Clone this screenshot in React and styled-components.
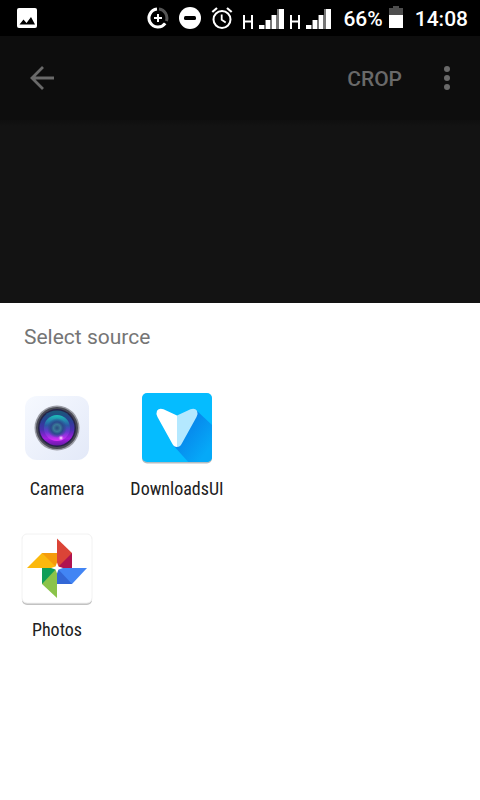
import styled, { createGlobalStyle } from "styled-components";

const GlobalStyle = createGlobalStyle`
  * {
    box-sizing: border-box;
  }

  body {
    margin: 0;
    background-color: #fff;
    font-family: Roboto, "Liberation Sans", sans-serif;
  }

  button {
    padding: 0;
    border: none;
    background: none;
    font-family: inherit;
    cursor: pointer;
  }

  svg {
    display: block;
    flex-shrink: 0;
  }
`;

const Screen = styled.div`
  display: flex;
  flex-direction: column;
  min-height: 100vh;
`;

const StatusBar = styled.div`
  display: flex;
  align-items: center;
  justify-content: space-between;
  height: 36px;
  padding: 0 12px 0 16px;
  background-color: #000;
  color: #fff;
`;

const StatusIcons = styled.div`
  display: flex;
  align-items: center;
  gap: ${(props) => props.$gap}px;
`;

const StatusText = styled.span`
  padding-top: 2px;
  font-size: 21px;
  font-weight: 500;
  line-height: 34px;
`;

const Toolbar = styled.header`
  display: flex;
  align-items: center;
  height: 84px;
  padding: 0 15px 0 24px;
  background-color: #0d0d0d;
  color: #696969;
`;

const IconButton = styled.button`
  display: grid;
  place-items: center;
  width: 36px;
  height: 48px;
  color: inherit;
`;

const CropButton = styled.button`
  margin-left: auto;
  margin-right: 27px;
  padding-top: 2px;
  color: inherit;
  font-size: 21px;
  font-weight: 500;
  line-height: 46px;
`;

const Preview = styled.main`
  height: 183px;
  background: linear-gradient(#0f0f0f, #131313 6px);
`;

const Sheet = styled.section`
  flex: 1;
  padding: 20px 0 24px;
  background-color: #fff;
`;

const Title = styled.h1`
  margin: 0 24px 41px;
  color: #757575;
  font-size: 21px;
  font-weight: 400;
  line-height: 28px;
`;

const SourceRows = styled.div`
  display: flex;
  flex-direction: column;
  gap: 34px;
`;

const SourceList = styled.div`
  display: grid;
  grid-template-columns: repeat(4, minmax(0, 1fr));
  column-gap: 6px;
  padding-right: 6px;
`;

const Source = styled.button`
  display: flex;
  flex-direction: column;
  align-items: center;
  gap: 15px;
  color: #212121;
`;

const SourceName = styled.span`
  font-family: "Roboto Condensed", "Liberation Sans Narrow", Roboto, sans-serif;
  font-size: 18px;
  line-height: 20px;
  white-space: nowrap;
`;

function ImageIcon() {
  return (
    <svg width="22" height="22" viewBox="0 0 22 22">
      <rect x="1" y="1" width="20" height="20" rx="2" fill="#fff" />
      <path d="M3.500 17.500l4-5 3 3.500 4.500-6 4 7.500z" fill="#000" />
    </svg>
  );
}

function DataSaverIcon() {
  return (
    <svg width="22" height="22" viewBox="0 0 22 22" fill="none" stroke="#fff">
      <path d="M12 2.1A9 9 0 0 1 19.4 14" stroke="#555" strokeWidth="3" />
      <path d="M10 2.1A9 9 0 1 0 18.2 16.4" strokeWidth="3" />
      <path d="M11 7v8M7 11h8" strokeWidth="2" />
    </svg>
  );
}

function DoNotDisturbIcon() {
  return (
    <svg width="22" height="22" viewBox="0 0 22 22">
      <circle cx="11" cy="11" r="11" fill="#fff" />
      <rect x="5" y="9" width="12" height="4" rx="1.5" fill="#000" />
    </svg>
  );
}

function AlarmIcon() {
  return (
    <svg width="22" height="22" viewBox="0 0 22 22" fill="none" stroke="#fff">
      <circle cx="11" cy="12.5" r="8.5" strokeWidth="2" />
      <path d="M1.3 5L6 1M20.7 5L16 1" strokeWidth="2.2" />
      <path d="M10.7 7.5v5.3l4 2.6" strokeWidth="1.8" />
    </svg>
  );
}

function SignalIcon() {
  return (
    <svg width="41" height="22" viewBox="1 -1 41 22">
      <path
        d="M2 7v14M10 7v14M2 13.5h8"
        fill="none"
        stroke="#fff"
        strokeWidth="2"
      />
      <path d="M17 17h6v4h-6zM23 12h6v9h-6zM29 7h6v14h-6zM35 1h7v20h-7z" fill="#777" />
      <path d="M17 17h5v4h-5zM24 12h4v9h-4zM30 7h4v14h-4zM37 1h5v20h-5z" fill="#fff" />
    </svg>
  );
}

function BatteryIcon() {
  return (
    <svg width="14" height="24" viewBox="0 0 14 24">
      <path d="M0 2h4V0h6v2h4v7H0z" fill="#4d4d4d" />
      <path d="M0 9h14v13H0z" fill="#fff" />
    </svg>
  );
}

function BackIcon() {
  return (
    <svg width="26" height="26" viewBox="0 0 26 26" fill="none" stroke="currentColor">
      <path d="M14 2L3 13l11 11M3 13h22" strokeWidth="2.8" />
    </svg>
  );
}

function MoreIcon() {
  return (
    <svg width="6" height="24" viewBox="0 0 6 24" fill="currentColor">
      <circle cx="3" cy="3" r="3" />
      <circle cx="3" cy="12" r="3" />
      <circle cx="3" cy="21" r="3" />
    </svg>
  );
}

function CameraIcon() {
  return (
    <svg width="72" height="72" viewBox="0 0 72 72">
      <defs>
        <linearGradient id="camera-body" x1="0" y1="0" x2="1" y2="1">
          <stop offset="0" stopColor="#f6f9ff" />
          <stop offset="1" stopColor="#e3e9f8" />
        </linearGradient>
        <linearGradient id="camera-glass" x1="0" y1="0" x2="0" y2="1">
          <stop offset="0" stopColor="#1a5a78" />
          <stop offset="0.3" stopColor="#2a3f94" />
          <stop offset="0.55" stopColor="#4a2fb0" />
          <stop offset="0.8" stopColor="#a21ee0" />
          <stop offset="1" stopColor="#6a1aa8" />
        </linearGradient>
        <linearGradient id="camera-inner" x1="0" y1="0" x2="0" y2="1">
          <stop offset="0" stopColor="#1cc0b8" />
          <stop offset="0.4" stopColor="#2b5aa6" />
          <stop offset="0.65" stopColor="#6a36d0" />
          <stop offset="1" stopColor="#e030fa" />
        </linearGradient>
        <radialGradient id="camera-core">
          <stop offset="0" stopColor="#2a4a80" />
          <stop offset="0.35" stopColor="#3a7a98" />
          <stop offset="0.6" stopColor="#2b4a8c" />
          <stop offset="1" stopColor="#2b4a8c" stopOpacity="0" />
        </radialGradient>
        <radialGradient id="camera-glow">
          <stop offset="0" stopColor="#fff" />
          <stop offset="1" stopColor="#f05cff" stopOpacity="0" />
        </radialGradient>
      </defs>
      <rect x="4" y="4" width="64" height="64" rx="12" fill="url(#camera-body)" />
      <circle cx="36" cy="36" r="22.5" fill="#9b9da6" />
      <circle cx="36" cy="36" r="21" fill="#4a4b55" />
      <circle cx="36" cy="36" r="19" fill="#25234a" />
      <circle cx="36" cy="36" r="17.500" fill="url(#camera-glass)" />
      <circle cx="36" cy="36" r="13" fill="url(#camera-inner)" />
      <circle cx="36" cy="36" r="10" fill="url(#camera-core)" />
      <circle cx="40" cy="46" r="3" fill="url(#camera-glow)" />
    </svg>
  );
}

function DownloadsIcon() {
  return (
    <svg width="72" height="72" viewBox="0 0 72 72">
      <defs>
        <linearGradient id="downloads-shade" x1="0.2" y1="0.2" x2="0.8" y2="0.8">
          <stop offset="0" stopColor="#087ee8" />
          <stop offset="1" stopColor="#05a9f8" />
        </linearGradient>
        <clipPath id="downloads-tile">
          <rect x="1" y="1" width="70" height="69" rx="5" />
        </clipPath>
      </defs>
      <rect x="1" y="2" width="70" height="69.500" rx="5" fill="#b5bcc0" />
      <g clipPath="url(#downloads-tile)">
        <path d="M0 0h72v72H0z" fill="#05bcff" />
        <path d="M55 18l18 17v37H49L32 53z" fill="url(#downloads-shade)" />
      </g>
      <path
        d="M36 23.500L22.500 17.300Q18 15.800 16 18.800Q14.700 21.500 16.500 25L31.300 51.800Q33 55 36 55z"
        fill="#fff"
      />
      <path
        d="M36 23.500L49.500 17.300Q54 15.800 56 18.800Q57.300 21.500 55.500 25L40.700 51.800Q39 55 36 55z"
        fill="#b4e8ff"
      />
    </svg>
  );
}

function PhotosIcon() {
  return (
    <svg width="72" height="72" viewBox="0 0 72 72">
      <rect x="1" y="2" width="70" height="70" rx="5" fill="#c2c2c2" />
      <rect x="1" y="1" width="70" height="69" rx="5" fill="#fff" stroke="#f2f2f2" />
      <path d="M36 5.500L51 20v15H36z" fill="#db4437" />
      <path d="M51 20v15H36z" fill="#b0124f" />
      <path d="M6 35l15-15h15v15z" fill="#fbb80d" />
      <path d="M21 20h15v15z" fill="#f59b0b" />
      <path d="M36 35h30L51 51H36z" fill="#4285f4" />
      <path d="M36 35l15 16H36z" fill="#3367d6" />
      <path d="M21 35h15v30L21 51z" fill="#8bc34a" />
      <path d="M21 35h15L21 51z" fill="#0f9d58" />
      <path d="M36 29.500l1.500 4 4.500 1.500-4.500 1.500-1.500 4-1.500-4L30 35l4.500-1.500z" fill="#fff" />
    </svg>
  );
}

const sourceRows = [
  [
    { name: "Camera", Icon: CameraIcon },
    { name: "DownloadsUI", Icon: DownloadsIcon },
  ],
  [{ name: "Photos", Icon: PhotosIcon }],
];

function SourceRow({ items }) {
  return (
    <SourceList>
      {items.map(({ name, Icon }) => (
        <Source key={name} type="button">
          <Icon />
          <SourceName>{name}</SourceName>
        </Source>
      ))}
    </SourceList>
  );
}

function App() {
  return (
    <Screen>
      <GlobalStyle />
      <StatusBar>
        <ImageIcon />
        <StatusIcons $gap={12}>
          <StatusIcons $gap={10}>
            <DataSaverIcon />
            <DoNotDisturbIcon />
            <AlarmIcon />
            <StatusIcons $gap={6}>
              <SignalIcon />
              <SignalIcon />
            </StatusIcons>
          </StatusIcons>
          <StatusIcons $gap={6}>
            <StatusText>66%</StatusText>
            <BatteryIcon />
          </StatusIcons>
          <StatusText>14:08</StatusText>
        </StatusIcons>
      </StatusBar>
      <Toolbar>
        <IconButton type="button" aria-label="Back">
          <BackIcon />
        </IconButton>
        <CropButton type="button">CROP</CropButton>
        <IconButton type="button" aria-label="More options">
          <MoreIcon />
        </IconButton>
      </Toolbar>
      <Preview />
      <Sheet>
        <Title>Select source</Title>
        <SourceRows>
          {sourceRows.map((items) => (
            <SourceRow key={items[0].name} items={items} />
          ))}
        </SourceRows>
      </Sheet>
    </Screen>
  );
}

export default App;
